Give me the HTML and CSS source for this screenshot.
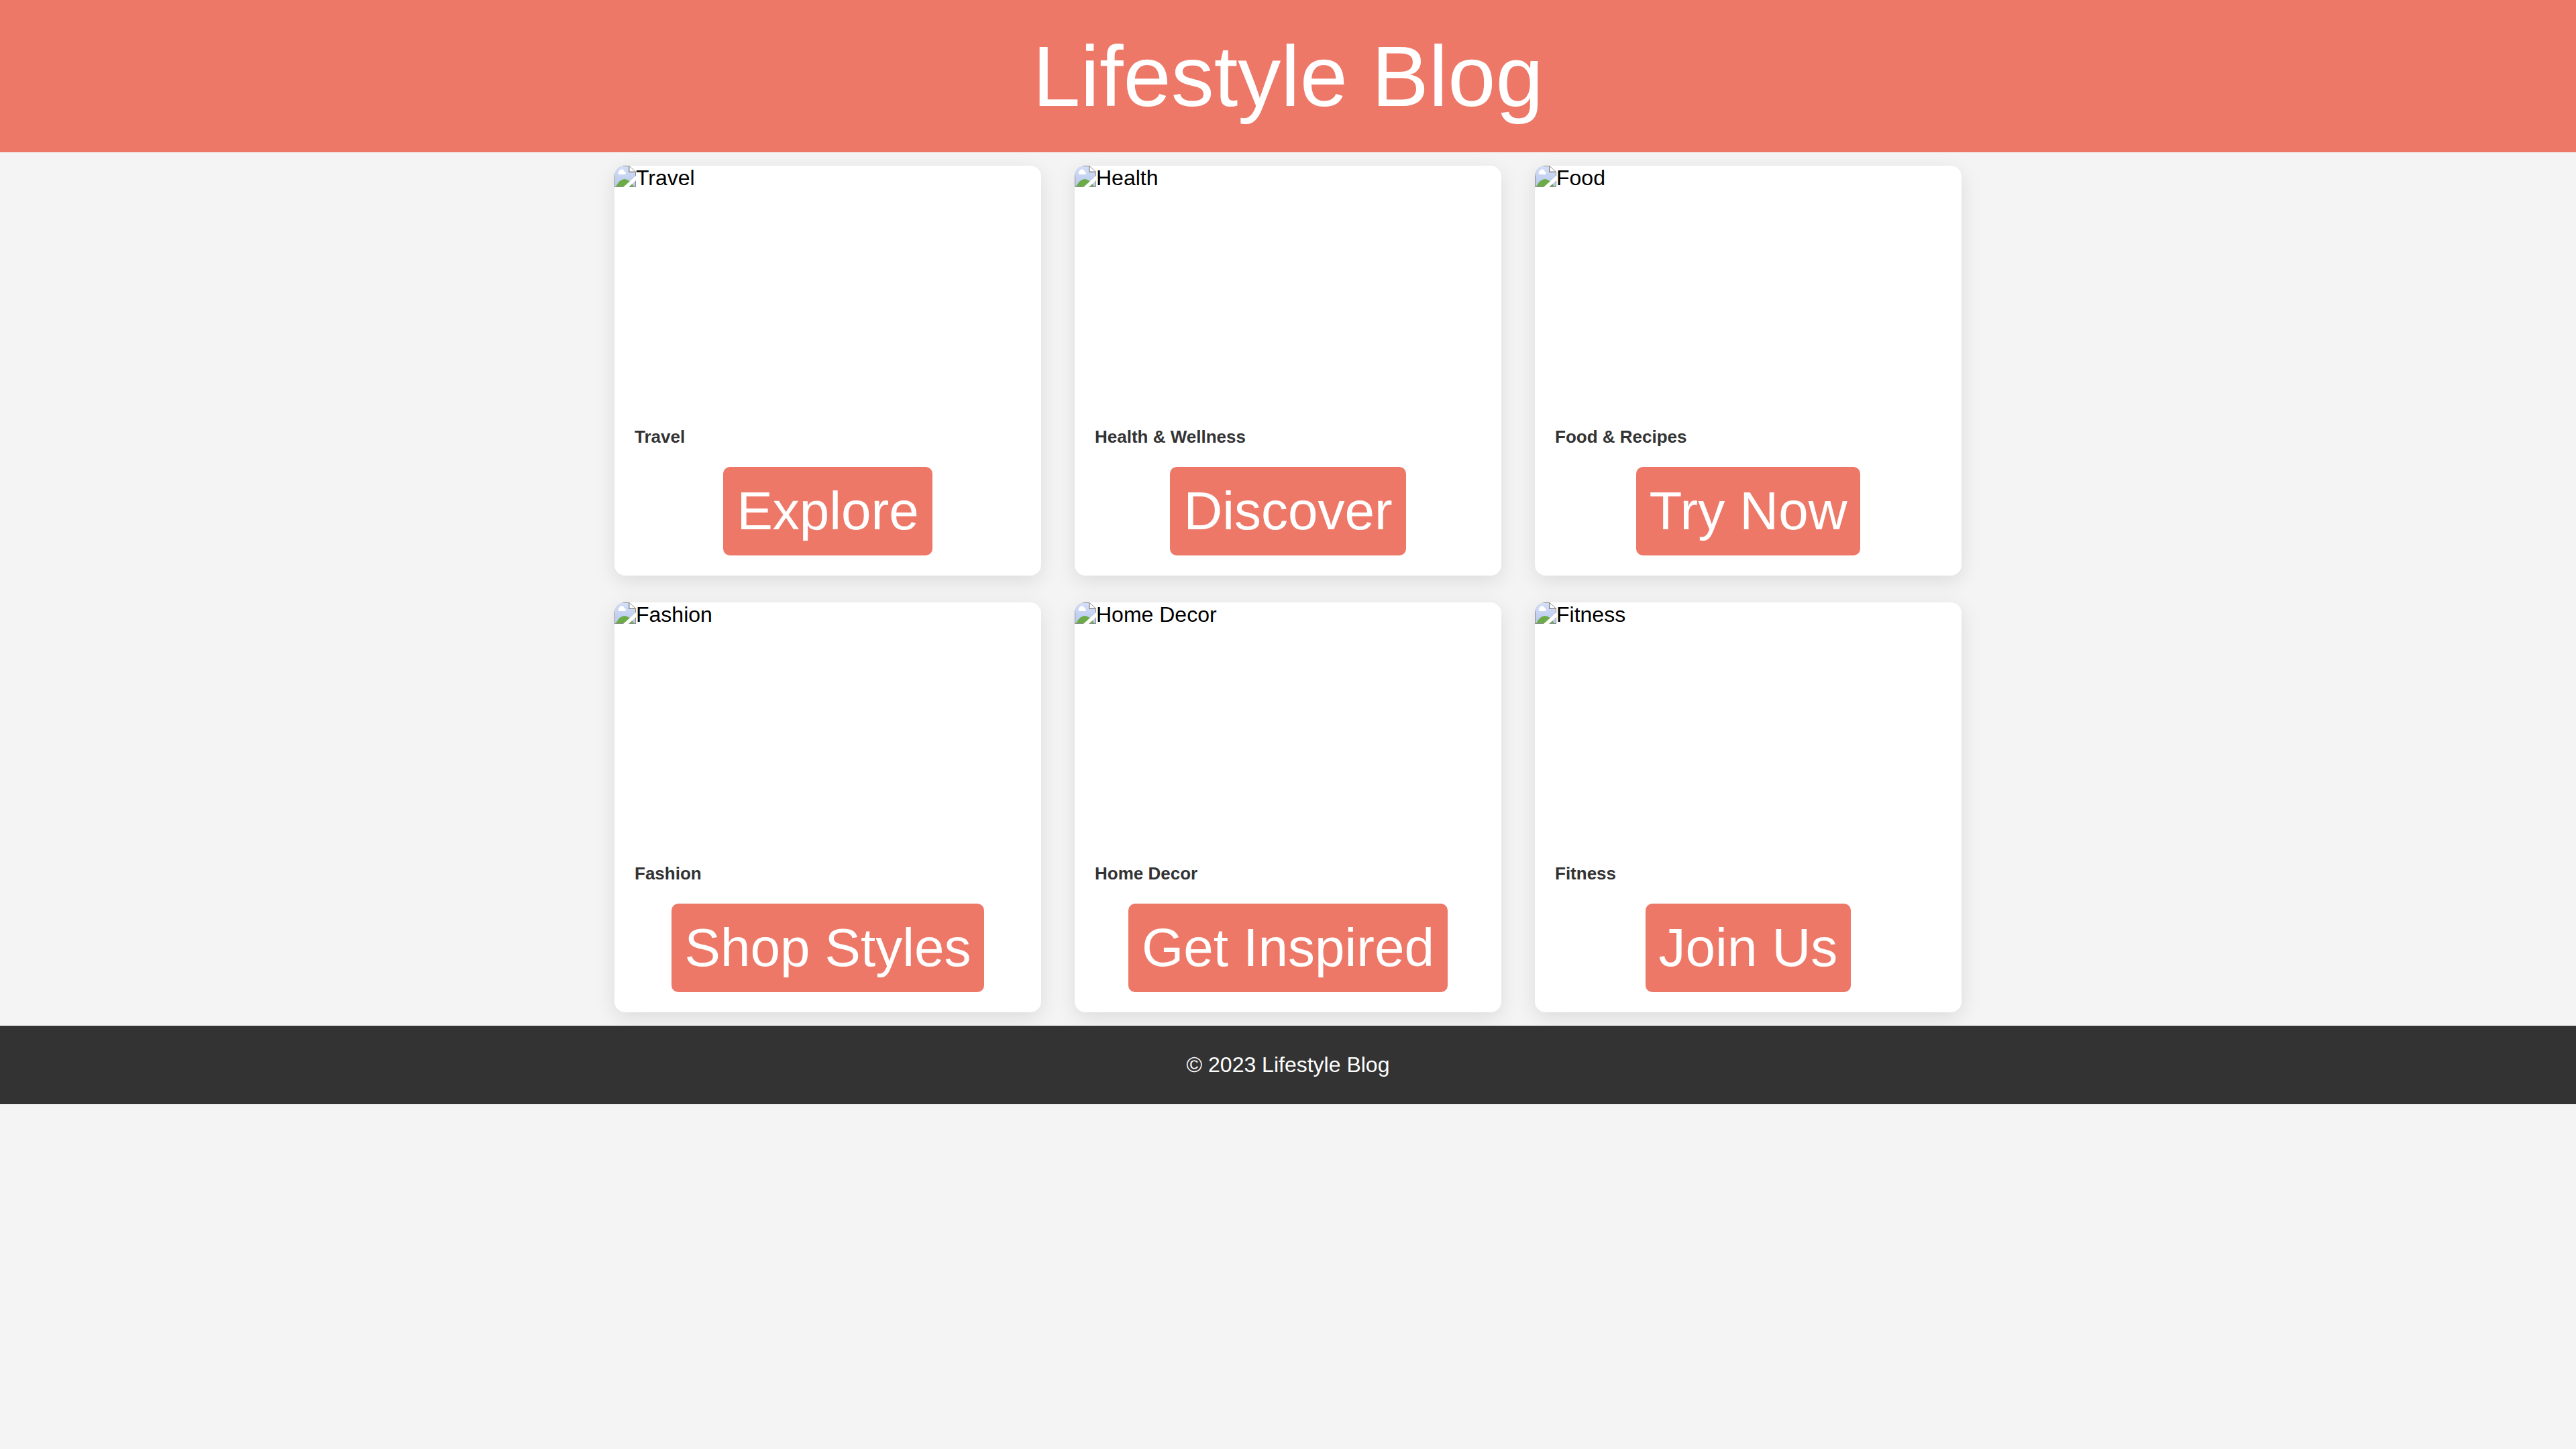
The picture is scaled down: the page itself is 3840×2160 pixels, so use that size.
FILE: index.html
```html
<!DOCTYPE html>
<html lang="en">
<head>
<meta charset="utf-8">
<meta name="viewport" content="width=device-width, initial-scale=1">
<title>Lifestyle Blog</title>
<link rel="stylesheet" href="styles.css">
</head>
<body>
<svg class="sprite" aria-hidden="true">
  <defs>
    <linearGradient id="sky" x1="0" y1="0" x2="0" y2="1"><stop offset="0" stop-color="#d3def8"/><stop offset="1" stop-color="#b9c9ec"/></linearGradient>
    <symbol id="picture" viewBox="0 0 32 32">
      <path d="M0 0H22L32 9V32H0Z" fill="#8c8c8c"/>
      <path d="M1 1H21V10H31V31H1Z" fill="url(#sky)"/>
      <path d="M22 1V9H31Z" fill="#fff"/>
      <path d="M22 1V9H31" fill="none" stroke="#8c8c8c"/>
      <path d="M7 13a3 3 0 0 1 0-5a4 4 0 0 1 7-1q1 2 1 2a2 2 0 0 1 0 4Z" fill="#fff"/>
      <path d="M2 31Q8 20 15 20T29 31Z" fill="#6dab48"/>
      <path d="M32 15V22L21 32H13Z" fill="#fff"/>
    </symbol>
  </defs>
</svg>
<header class="header"><h1 class="site-title">Lifestyle Blog</h1></header>
<main class="cards">
  <article class="card">
    <div class="card-image"><svg class="icon" aria-hidden="true"><use href="#picture"/></svg><span>Travel</span></div>
    <div class="card-body"><h2 class="card-title">Travel</h2><button class="button" type="button">Explore</button></div>
  </article>
  <article class="card">
    <div class="card-image"><svg class="icon" aria-hidden="true"><use href="#picture"/></svg><span>Health</span></div>
    <div class="card-body"><h2 class="card-title">Health &amp; Wellness</h2><button class="button" type="button">Discover</button></div>
  </article>
  <article class="card">
    <div class="card-image"><svg class="icon" aria-hidden="true"><use href="#picture"/></svg><span>Food</span></div>
    <div class="card-body"><h2 class="card-title">Food &amp; Recipes</h2><button class="button" type="button">Try Now</button></div>
  </article>
  <article class="card">
    <div class="card-image"><svg class="icon" aria-hidden="true"><use href="#picture"/></svg><span>Fashion</span></div>
    <div class="card-body"><h2 class="card-title">Fashion</h2><button class="button" type="button">Shop Styles</button></div>
  </article>
  <article class="card">
    <div class="card-image"><svg class="icon" aria-hidden="true"><use href="#picture"/></svg><span>Home Decor</span></div>
    <div class="card-body"><h2 class="card-title">Home Decor</h2><button class="button" type="button">Get Inspired</button></div>
  </article>
  <article class="card">
    <div class="card-image"><svg class="icon" aria-hidden="true"><use href="#picture"/></svg><span>Fitness</span></div>
    <div class="card-body"><h2 class="card-title">Fitness</h2><button class="button" type="button">Join Us</button></div>
  </article>
</main>
<footer class="footer">© 2023 Lifestyle Blog</footer>
</body>
</html>
```
FILE: styles.css
```css
* {
  box-sizing: border-box;
}

body {
  margin: 0;
  background: #f4f4f4;
  color: #000;
  font-family: "Liberation Sans", Arial, sans-serif;
  font-size: 32px;
  line-height: 37px;
}

.sprite {
  display: block;
  width: 0;
  height: 0;
}

.header {
  padding: 40px;
  background: #ee7868;
  color: #fff;
  text-align: center;
}

.site-title {
  margin: 0;
  font-size: 128px;
  font-weight: 400;
  line-height: 147px;
}

.cards {
  display: grid;
  grid-template-columns: repeat(auto-fit, minmax(560px, 1fr));
  gap: 40px 50px;
  max-width: 2048px;
  margin: 0 auto;
  padding: 20px;
}

.card {
  overflow: hidden;
  border-radius: 16px;
  background: #fff;
  box-shadow: 0 8px 30px rgba(0, 0, 0, 0.1);
}

.card-image {
  display: flex;
  align-items: flex-start;
  height: 360px;
}

.icon {
  width: 32px;
  height: 32px;
}

.card-body {
  display: flex;
  flex-direction: column;
  align-items: center;
  gap: 30px;
  padding: 30px;
}

.card-title {
  align-self: flex-start;
  margin: 0;
  color: #333;
  font-size: 26px;
  line-height: 29px;
}

.button {
  padding: 20px;
  border: 0;
  border-radius: 10px;
  background: #ee7868;
  color: #fff;
  font: inherit;
  font-size: 80px;
  line-height: 92px;
  cursor: pointer;
}

.footer {
  position: relative;
  padding: 40px;
  background: #333;
  color: #fff;
  text-align: center;
}
```
